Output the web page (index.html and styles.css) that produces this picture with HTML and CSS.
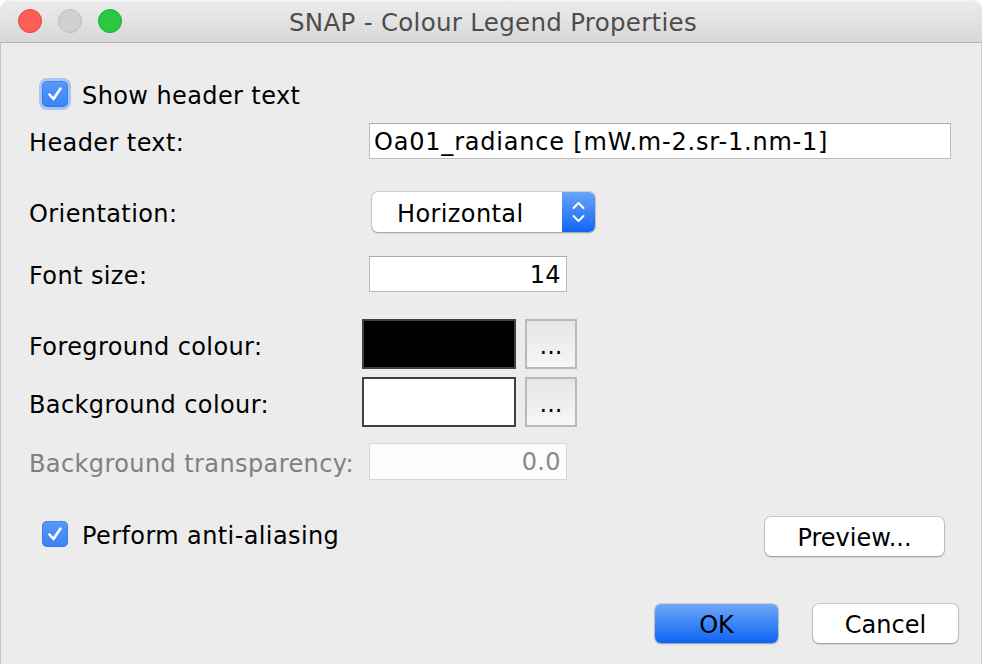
FILE: index.html
```html
<!DOCTYPE html>
<html>
<head>
<meta charset="utf-8">
<link rel="stylesheet" href="styles.css">
<title>SNAP - Colour Legend Properties</title>
</head>
<body>
<div class="window">
  <div class="titlebar">
    <div class="lights">
      <span class="light red"></span>
      <span class="light grey"></span>
      <span class="light green"></span>
    </div>
    <div class="title">SNAP - Colour Legend Properties</div>
  </div>
  <div class="content">
    <div class="row row-check">
      <span class="checkbox focus"><svg viewBox="0 0 26 26" width="26" height="26"><path d="M7.5 13.5 L11.5 18 L18.5 7.5" fill="none" stroke="#fff" stroke-width="2.6" stroke-linecap="round" stroke-linejoin="round"/></svg></span>
      <span class="check-label">Show header text</span>
    </div>
    <div class="row row-header">
      <span class="label">Header text:</span>
      <div class="field field-wide">Oa01_radiance [mW.m-2.sr-1.nm-1]</div>
    </div>
    <div class="row row-orient">
      <span class="label">Orientation:</span>
      <div class="combo">
        <span class="combo-text">Horizontal</span>
        <span class="combo-arrow"><svg viewBox="0 0 33 40" width="33" height="40"><path d="M11.5 16 L16.5 11 L21.5 16" fill="none" stroke="#fff" stroke-width="2" stroke-linecap="round" stroke-linejoin="round"/><path d="M11.5 24 L16.5 29 L21.5 24" fill="none" stroke="#fff" stroke-width="2" stroke-linecap="round" stroke-linejoin="round"/></svg></span>
      </div>
    </div>
    <div class="row row-font">
      <span class="label">Font size:</span>
      <div class="field field-num">14</div>
    </div>
    <div class="row row-fg">
      <span class="label">Foreground colour:</span>
      <div class="swatch swatch-black"></div>
      <div class="dots-btn">...</div>
    </div>
    <div class="row row-bg">
      <span class="label">Background colour:</span>
      <div class="swatch swatch-white"></div>
      <div class="dots-btn">...</div>
    </div>
    <div class="row row-transp">
      <span class="label disabled">Background transparency:</span>
      <div class="field field-num field-disabled">0.0</div>
    </div>
    <div class="row row-aa">
      <span class="checkbox"><svg viewBox="0 0 26 26" width="26" height="26"><path d="M7.5 13.5 L11.5 18 L18.5 7.5" fill="none" stroke="#fff" stroke-width="2.6" stroke-linecap="round" stroke-linejoin="round"/></svg></span>
      <span class="check-label">Perform anti-aliasing</span>
      <div class="spacer"></div>
      <button class="btn btn-preview">Preview...</button>
    </div>
    <div class="row row-buttons">
      <button class="btn btn-ok">OK</button>
      <button class="btn btn-cancel">Cancel</button>
    </div>
  </div>
</div>
</body>
</html>
```

FILE: styles.css
```css
html, body {
  margin: 0;
  padding: 0;
  background: #ffffff;
}

body {
  width: 984px;
  height: 664px;
  overflow: hidden;
  font-family: "DejaVu Sans", "Liberation Sans", sans-serif;
  font-size: 24px;
  color: #000;
}

.window {
  width: 982px;
  height: 664px;
  background: #ececec;
  border-radius: 10px 10px 0 0;
  box-shadow: inset 1px 0 0 #c4c4c4, inset -1px 0 0 #d0d0d0;
  display: flex;
  flex-direction: column;
  overflow: hidden;
}

.titlebar {
  height: 42px;
  flex: none;
  background: linear-gradient(#ececec, #d8d8d8);
  border-bottom: 1px solid #b3b3b3;
  border-radius: 10px 10px 0 0;
  box-shadow: inset 0 1px 0 #f6f6f6;
  display: flex;
  align-items: center;
  position: relative;
}

.lights {
  display: flex;
  gap: 16px;
  padding-left: 18px;
  align-items: center;
}

.light {
  width: 24px;
  height: 24px;
  border-radius: 50%;
  box-sizing: border-box;
}

.red { background: #fd5f57; border: 1px solid #e0443e; }
.grey { background: #d0d0d0; border: 1px solid #bdbdbd; }
.green { background: #2cc840; border: 1px solid #1aab29; }

.title {
  position: absolute;
  left: 0;
  right: 0;
  top: 2px;
  line-height: 42px;
  text-align: center;
  color: #4d4d4d;
  font-size: 24.5px;
  letter-spacing: 0.3px;
  padding-left: 4px;
}

.content {
  display: flex;
  flex-direction: column;
  padding-left: 29px;
  letter-spacing: 0.4px;
}

.row {
  display: flex;
  align-items: center;
}

.row-check { margin-top: 35px; height: 32px; padding-left: 13px; }
.row-header { margin-top: 13px; height: 36px; }
.row-orient { margin-top: 33px; height: 40px; }
.row-font { margin-top: 23px; height: 37px; }
.row-fg { margin-top: 27px; height: 50px; }
.row-bg { margin-top: 8px; height: 50px; }
.row-transp { margin-top: 16px; height: 37px; }
.row-aa { margin-top: 34px; height: 40px; padding-left: 13px; padding-right: 38px; }
.row-buttons { margin-top: 50px; height: 39px; justify-content: flex-end; padding-right: 24px; gap: 35px; }

.label {
  width: 340px;
  flex: none;
  white-space: nowrap;
  padding-top: 4px;
}

.row-fg .label, .row-bg .label { padding-top: 6px; }

.label.disabled { color: #808080; }

.checkbox {
  width: 26px;
  height: 26px;
  border-radius: 5px;
  background: linear-gradient(#5898f8, #3a84f5);
  box-shadow: inset 0 0 0 1px rgba(30, 100, 220, 0.35);
  flex: none;
  display: flex;
}

.checkbox.focus {
  box-shadow: inset 0 0 0 1px rgba(30, 100, 220, 0.35), 0 0 0 3px rgba(110, 165, 245, 0.55);
}

.check-label {
  margin-left: 14px;
  white-space: nowrap;
  padding-top: 4px;
}

.field {
  background: #fff;
  border: 1px solid #bcbcbc;
  border-top-color: #a9a9a9;
  height: 36px;
  box-sizing: border-box;
  line-height: 36px;
  padding: 0 4px;
  white-space: nowrap;
}

.field-wide { width: 582px; letter-spacing: 0.8px; }

.field-num {
  width: 198px;
  text-align: right;
  padding-right: 5px;
}

.field-disabled {
  color: #8a8a8a;
  border-color: #d6d6d6;
  background: #fcfcfc;
  height: 37px;
}

.combo {
  margin-left: 3px;
  width: 223px;
  height: 40px;
  background: #fff;
  border-radius: 6px;
  box-shadow: 0 0 0 1px rgba(0, 0, 0, 0.12), 0 1px 2px rgba(0, 0, 0, 0.25);
  display: flex;
  align-items: center;
  overflow: hidden;
}

.combo-text {
  flex: 1;
  padding-left: 25px;
  padding-top: 3px;
}

.combo-arrow {
  width: 33px;
  height: 40px;
  background: linear-gradient(#69a5f8, #0f66f5);
  display: flex;
}

.swatch {
  width: 154px;
  height: 50px;
  box-sizing: border-box;
  border: 2px solid #404040;
  margin-left: -7px;
}

.swatch-black { background: #000; }
.swatch-white { background: #fff; }

.dots-btn {
  width: 52px;
  height: 50px;
  box-sizing: border-box;
  margin-left: 9px;
  border: 2px solid #b9b9b9;
  background: linear-gradient(#e6e6e6, #f6f6f6);
  font-size: 24px;
  letter-spacing: 0;
  display: flex;
  align-items: center;
  justify-content: center;
  padding-top: 4px;
}

.spacer { flex: 1; }

.btn {
  font-family: "DejaVu Sans", "Liberation Sans", sans-serif;
  font-size: 24px;
  color: #000;
  background: #fff;
  border: none;
  border-radius: 6px;
  box-shadow: 0 0 0 1px rgba(0, 0, 0, 0.13), 0 1px 2px rgba(0, 0, 0, 0.28);
  height: 39px;
  padding: 3px 0 0;
  display: flex;
  align-items: center;
  justify-content: center;
}

.btn-preview { width: 179px; margin-top: 4px; }
.btn-ok {
  width: 123px;
  background: linear-gradient(#6ea8f8, #0d64f6);
}
.btn-cancel { width: 145px; }
```
